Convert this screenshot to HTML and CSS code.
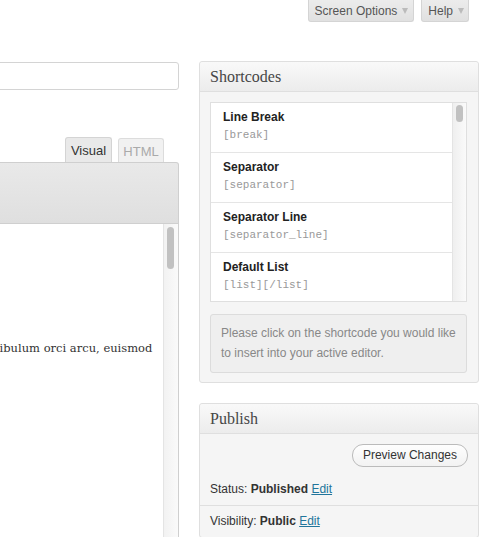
FILE: index.html
```html
<!DOCTYPE html>
<html>
<head>
<meta charset="utf-8">
<link rel="stylesheet" href="styles.css">
</head>
<body>
<div class="top-bar">
  <div class="tab-btn">Screen Options <span class="arrow"></span></div>
  <div class="tab-btn help">Help <span class="arrow"></span></div>
</div>
<div class="columns">
  <div class="main">
    <div class="title-input"></div>
    <div class="editor-tabs">
      <div class="etab active">Visual</div>
      <div class="etab">HTML</div>
    </div>
    <div class="toolbar"></div>
    <div class="editor">
      <div class="editor-content">
        <p class="para">Vestibulum orci arcu, euismod</p>
      </div>
      <div class="vscroll"><div class="thumb big"></div></div>
    </div>
  </div>
  <div class="side">
    <div class="postbox">
      <div class="pb-head">Shortcodes</div>
      <div class="pb-body">
        <div class="sc-list">
          <div class="sc-items">
            <div class="sc-item"><div class="sc-name">Line Break</div><div class="sc-code">[break]</div></div>
            <div class="sc-item"><div class="sc-name">Separator</div><div class="sc-code">[separator]</div></div>
            <div class="sc-item"><div class="sc-name">Separator Line</div><div class="sc-code">[separator_line]</div></div>
            <div class="sc-item"><div class="sc-name">Default List</div><div class="sc-code">[list][/list]</div></div>
          </div>
          <div class="sc-scroll"><div class="thumb small"></div></div>
        </div>
        <div class="sc-info">Please click on the shortcode you would like to insert into your active editor.</div>
      </div>
    </div>
    <div class="postbox publish">
      <div class="pb-head">Publish</div>
      <div class="pub-body">
        <div class="pub-actions"><span class="preview-btn">Preview Changes</span></div>
        <div class="pub-row first">Status: <b>Published</b> <a href="#">Edit</a></div>
        <div class="pub-row sep">Visibility: <b>Public</b> <a href="#">Edit</a></div>
      </div>
    </div>
  </div>
</div>
</body>
</html>
```

FILE: styles.css
```css
html, body {
  margin: 0;
  padding: 0;
  background: #fff;
  overflow: hidden;
}
body {
  font-family: "Liberation Sans", Arial, sans-serif;
  font-size: 12px;
  color: #333;
  width: 494px;
  height: 537px;
}
.top-bar {
  display: flex;
  justify-content: flex-end;
  gap: 7px;
  padding-right: 25px;
  height: 22px;
}
.tab-btn {
  display: flex;
  align-items: center;
  gap: 5px;
  height: 22px;
  padding: 0 5px 0 6px;
  background: linear-gradient(#ececec, #e0e0e0);
  border: 1px solid #d4d4d4;
  border-top: none;
  border-radius: 0 0 3px 3px;
  color: #555;
  font-size: 12px;
  box-sizing: border-box;
}
.tab-btn.help {
  padding-left: 6px;
  padding-right: 4px;
}
.arrow {
  width: 0;
  height: 0;
  border-left: 3px solid transparent;
  border-right: 3px solid transparent;
  border-top: 6px solid #bbb;
  margin-top: 1px;
}
.columns {
  display: flex;
  gap: 20px;
  margin-top: 39px;
}
.main {
  width: 400px;
  margin-left: -221px;
  flex: none;
}
.title-input {
  margin-top: 1px;
  height: 26px;
  border: 1px solid #d4d4d4;
  border-radius: 3px;
  background: #fff;
}
.editor-tabs {
  display: flex;
  justify-content: flex-end;
  align-items: flex-end;
  gap: 6px;
  margin-top: 47px;
  padding-right: 15px;
  height: 25px;
}
.etab {
  box-sizing: border-box;
  width: 46px;
  text-align: center;
  height: 24px;
  line-height: 25px;
  border: 1px solid #dcdcdc;
  border-bottom: none;
  border-radius: 3px 3px 0 0;
  font-size: 13px;
  background: #f1f1f1;
  color: #aaa;
}
.etab.active {
  width: 47px;
  background: #e9e9e9;
  color: #333;
  border-color: #d4d4d4;
  height: 25px;
}
.toolbar {
  height: 60px;
  background: linear-gradient(#e9e9e9, #dfdfdf);
  border: 1px solid #cfcfcf;
  border-left: none;
  border-radius: 0 3px 0 0;
}
.editor {
  display: flex;
  height: 320px;
  border-right: 1px solid #cfcfcf;
  background: #fff;
}
.editor-content {
  flex: 1;
  padding-left: 196px;
}
.para {
  margin: 117px 0 0;
  font-family: "DejaVu Serif", Georgia, serif;
  font-size: 11.5px;
  color: #333;
  white-space: nowrap;
}
.vscroll {
  background: linear-gradient(90deg, #f2f2f2, #fafafa);
  border-left: 1px solid #e4e4e4;
  padding: 3px 3px 0 3px;
  box-sizing: border-box;
  width: 15px;
}
.thumb {
  width: 7px;
  background: #c1c1c1;
  border-radius: 4px;
}
.thumb.big { height: 42px; }
.thumb.small { height: 17px; }
.side {
  width: 280px;
  flex: none;
  display: flex;
  flex-direction: column;
  gap: 20px;
}
.postbox {
  border: 1px solid #dfdfdf;
  border-radius: 3px;
  background: #f5f5f5;
}
.pb-head {
  height: 29px;
  line-height: 30px;
  padding-left: 10px;
  font-family: "Liberation Serif", Georgia, serif;
  font-size: 16px;
  color: #464646;
  background: linear-gradient(#f9f9f9, #ececec);
  border-bottom: 1px solid #dfdfdf;
  border-radius: 3px 3px 0 0;
}
.pb-body {
  padding: 10px 11px 9px 10px;
}
.sc-list {
  display: flex;
  height: 198px;
  border: 1px solid #dfdfdf;
  background: #fff;
  overflow: hidden;
}
.sc-items {
  flex: 1;
}
.sc-item {
  padding: 6px 0 8px 12px;
  border-bottom: 1px solid #e5e5e5;
  height: 35px;
}
.sc-name {
  font-weight: bold;
  font-size: 12px;
  line-height: 16px;
  color: #222;
}
.sc-code {
  margin-top: 2px;
  font-family: "Liberation Mono", "Courier New", monospace;
  font-size: 11px;
  line-height: 16px;
  color: #999;
}
.sc-scroll {
  width: 14px;
  box-sizing: border-box;
  padding: 2px 3px;
  border-left: 1px solid #e4e4e4;
  background: linear-gradient(90deg, #efefef, #fafafa);
}
.sc-info {
  margin-top: 12px;
  height: 47px;
  padding: 8px 8px 2px 10px;
  border: 1px solid #dcdcdc;
  border-radius: 3px;
  background: #efefef;
  color: #888;
  font-size: 12px;
  line-height: 20px;
}
.pub-body {
  padding-top: 10px;
}
.pub-actions {
  display: flex;
  justify-content: flex-end;
  padding-right: 10px;
  height: 23px;
}
.preview-btn {
  height: 21px;
  line-height: 21px;
  padding: 0 10px;
  border: 1px solid #bbb;
  border-radius: 11px;
  background: linear-gradient(#fefefe, #f2f2f2);
  color: #333;
  font-size: 12px;
}
.pub-row {
  padding: 0 10px;
  height: 31px;
  line-height: 31px;
  font-size: 12px;
  color: #333;
}
.pub-row.first {
  margin-top: 7px;
}
.pub-row.sep {
  border-top: 1px solid #dfdfdf;
}
.pub-row a {
  color: #21759b;
  text-decoration: underline;
}
```
